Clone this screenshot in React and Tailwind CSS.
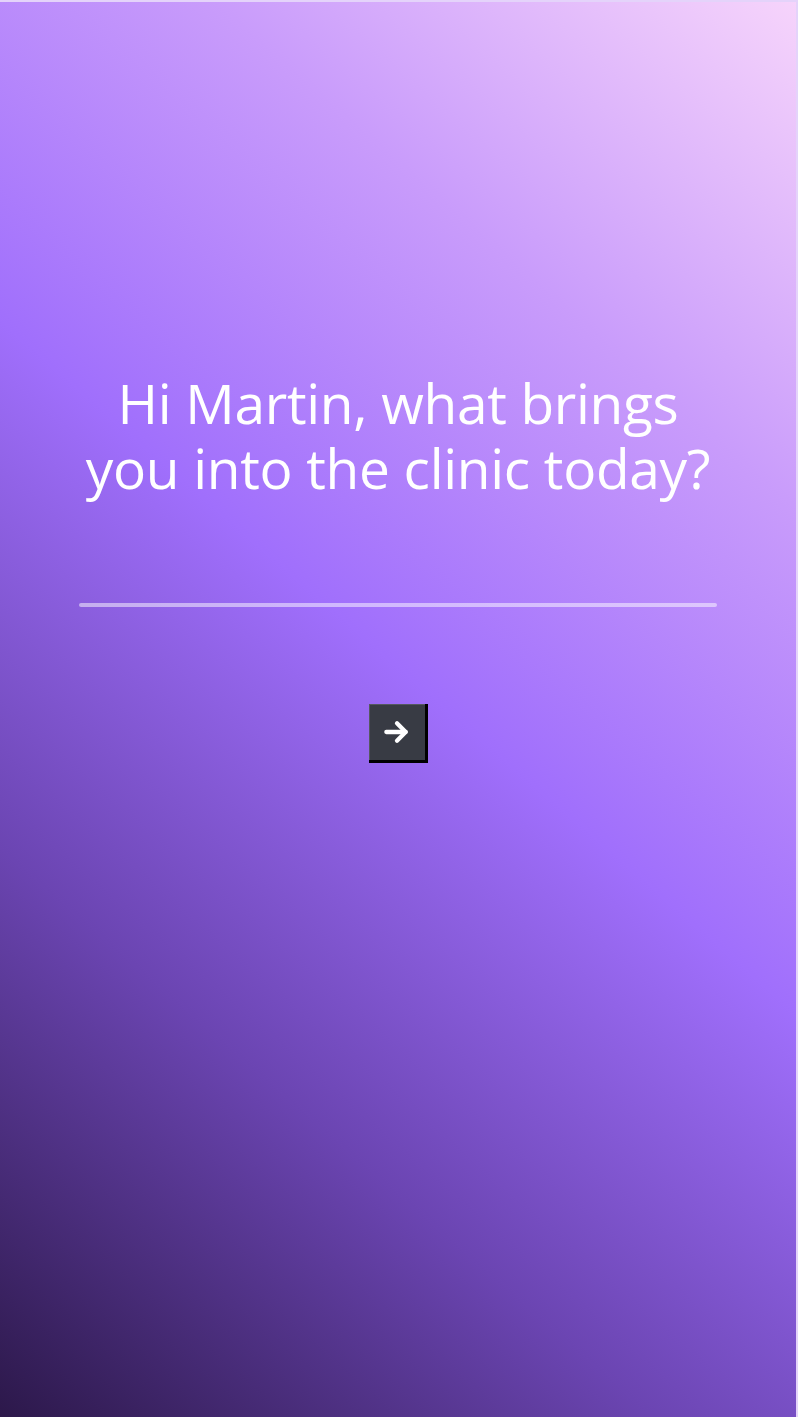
import React from 'react';

const ArrowIcon = () => (
  <svg width="32" height="32" viewBox="0 0 24 24" fill="none" xmlns="http://www.w3.org/2000/svg">
    <path d="M4 12H18.5" stroke="white" strokeWidth="3.2" strokeLinecap="round" />
    <path d="M12 5.5L18.5 12L12 18.5" stroke="white" strokeWidth="3.2" strokeLinecap="round" strokeLinejoin="round" />
  </svg>
);

export default function App() {
  return (
    <div
      className="h-[1417px] w-full flex flex-col items-center border-t-2 border-r-2 border-[#e4d3fa] bg-[linear-gradient(41deg,#2c184a_0%,#6b45b2_27%,#a06ffc_52%,#c99cfb_76%,#f6d4fb_100%)]"
      style={{ fontFamily: '"Open Sans", "Noto Sans", sans-serif' }}
    >
      <h1 className="mt-[368px] text-center text-white text-[55px] leading-[65px] font-normal tracking-[-0.3px]">
        Hi Martin, what brings
        <br />
        you into the clinic today?
      </h1>

      <div className="mt-[103px] w-[638px] h-[4px] rounded-sm bg-white/50" />

      <button className="mt-[97px] w-[59px] h-[59px] flex items-center justify-center bg-[#383b44] border-r-[3px] border-b-[3px] border-black shadow-[inset_1px_1px_0_rgba(255,255,255,0.15)]">
        <ArrowIcon />
      </button>
    </div>
  );
}
